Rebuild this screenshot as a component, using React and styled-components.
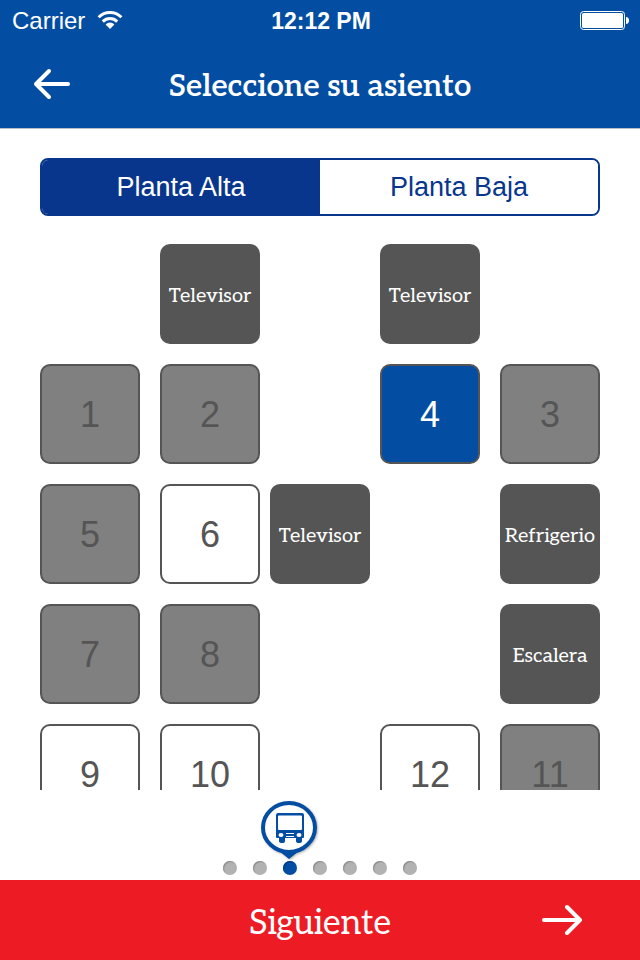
import React, { useState } from 'react'
import styled, { createGlobalStyle, css } from 'styled-components'

const rows = [
  { id: 'a', left: [null, { label: 'Televisor' }], right: [{ label: 'Televisor' }, null] },
  { id: 'b', left: [{ seat: 1, taken: true }, { seat: 2, taken: true }], right: [{ seat: 4 }, { seat: 3, taken: true }] },
  { id: 'c', left: [{ seat: 5, taken: true }, { seat: 6 }], aisle: { label: 'Televisor' }, right: [null, { label: 'Refrigerio' }] },
  { id: 'd', left: [{ seat: 7, taken: true }, { seat: 8, taken: true }], right: [null, { label: 'Escalera' }] },
  { id: 'e', left: [{ seat: 9 }, { seat: 10 }], right: [{ seat: 12 }, { seat: 11, taken: true }] },
]

const floors = ['Planta Alta', 'Planta Baja']
const steps = [0, 1, 2, 3, 4, 5, 6]
const currentStep = 2

const WifiIcon = () => (
  <svg width='26' height='20' viewBox='0 0 26 20' aria-hidden='true'>
    <g fill='none' stroke='#fff' strokeWidth='3'>
      <path d='M1.6 6.2a16.2 16.2 0 0 1 22.8 0' />
      <path d='M5.8 10.6a10.2 10.2 0 0 1 14.4 0' />
    </g>
    <path d='M13 18l-4.4-4.6a6.2 6.2 0 0 1 8.8 0z' fill='#fff' />
  </svg>
)

const BatteryIcon = () => (
  <svg width='50' height='20' viewBox='0 0 50 20' aria-hidden='true'>
    <rect x='0.5' y='0.5' width='44' height='18' rx='3' fill='none' stroke='#fff' />
    <rect x='2' y='2' width='41' height='15' rx='1.5' fill='#fff' />
    <path d='M46 6c2 0 3 1.5 3 3.5s-1 3.5-3 3.5z' fill='#fff' />
  </svg>
)

const ArrowIcon = ({ back }) => (
  <svg width='40' height='32' viewBox='0 0 40 32' aria-hidden='true'>
    <path
      d={back ? 'M36 16H4M17 3L4 16l13 13' : 'M2 16h36M25 3l13 13-13 13'}
      fill='none'
      stroke='#fff'
      strokeWidth='4'
      strokeLinecap='round'
      strokeLinejoin='round'
    />
  </svg>
)

const BusPin = () => (
  <PinSvg width='60' height='62' viewBox='0 0 60 62' aria-hidden='true'>
    <path d='M20 51l10 8 10-8z' fill='#034ea2' />
    <ellipse cx='30' cy='27.5' rx='26' ry='24.5' fill='#fff' stroke='#034ea2' strokeWidth='4' />
    <path
      fillRule='evenodd'
      fill='#034ea2'
      d='M19 13h24q2 0 2 2v22q0 1-1 1h-1v3q0 2-3 2t-3-2v-3H26v3q0 2-3 2t-3-2v-3h-2q-1 0-1-1V15q0-2 2-2zM20 15.500q-1 0-1 1V29q0 1 1 1h22q1 0 1-1V16.500q0-1-1-1z'
    />
    <ellipse cx='22' cy='35' rx='2.5' ry='2' fill='#fff' />
    <ellipse cx='40' cy='35' rx='2.5' ry='2' fill='#fff' />
    <path d='M27 33.500h8M27 36.500h8' stroke='#fff' strokeWidth='1' />
  </PinSvg>
)

const Place = ({ item, selected, onSelect }) => {
  if (!item) return <Empty />
  if (item.label) return <Fixture>{item.label}</Fixture>
  return (
    <Seat
      type='button'
      disabled={item.taken}
      $selected={selected === item.seat}
      aria-pressed={selected === item.seat}
      onClick={() => onSelect(item.seat)}
    >
      {item.seat}
    </Seat>
  )
}

const App = () => {
  const [floor, setFloor] = useState(floors[0])
  const [selected, setSelected] = useState(4)

  const renderPlace = (item, index) => (
    <Place key={index} item={item} selected={selected} onSelect={setSelected} />
  )

  return (
    <Screen>
      <GlobalStyle />
      <Header>
        <StatusBar>
          <Carrier>
            Carrier
            <WifiIcon />
          </Carrier>
          <Clock>12:12 PM</Clock>
          <Battery>
            <BatteryIcon />
          </Battery>
        </StatusBar>
        <TitleBar>
          <IconButton type='button' aria-label='Volver'>
            <ArrowIcon back />
          </IconButton>
          <Title>Seleccione su asiento</Title>
        </TitleBar>
      </Header>

      <Segmented>
        {floors.map((name) => (
          <Segment
            key={name}
            type='button'
            $active={floor === name}
            aria-pressed={floor === name}
            onClick={() => setFloor(name)}
          >
            {name}
          </Segment>
        ))}
      </Segmented>

      <SeatMap>
        {rows.map(({ id, left, aisle, right }) => (
          <SeatRow key={id}>
            <Pair>{left.map(renderPlace)}</Pair>
            <Aisle>{aisle && <Place item={aisle} />}</Aisle>
            <Pair>{right.map(renderPlace)}</Pair>
          </SeatRow>
        ))}
      </SeatMap>

      <Steps>
        {steps.map((step) => (
          <Step key={step} $active={step === currentStep}>
            {step === currentStep && <BusPin />}
          </Step>
        ))}
      </Steps>

      <NextButton type='button'>
        <NextLabel>Siguiente</NextLabel>
        <ArrowIcon />
      </NextButton>
    </Screen>
  )
}

const sans = '"Helvetica Neue", "Liberation Sans", Arial, sans-serif'
const slab = 'Aleo, "DejaVu Serif", serif'

const GlobalStyle = createGlobalStyle`
  * {
    box-sizing: border-box;
  }
  body {
    margin: 0;
    background: #fff;
    font-family: ${sans};
  }
  button {
    margin: 0;
    padding: 0;
    border: 0;
    font: inherit;
    cursor: pointer;
  }
  svg {
    display: block;
  }
`

const Screen = styled.div`
  display: flex;
  flex-direction: column;
  height: 100vh;
`

const Header = styled.header`
  flex: none;
  color: #fff;
  background: #034ea2;
  border-bottom: 1px solid #b5bfcc;
`

const StatusBar = styled.div`
  display: grid;
  grid-template-columns: 1fr auto 1fr;
  align-items: center;
  height: 40px;
  padding: 2px 10px 0 12px;
  font-size: 24px;
`

const Carrier = styled.div`
  display: flex;
  align-items: center;
  gap: 12px;
`

const Clock = styled.time`
  font-size: 23px;
  font-weight: 700;
`

const Battery = styled.div`
  justify-self: end;
`

const TitleBar = styled.div`
  display: grid;
  grid-template-columns: 40px 1fr 40px;
  align-items: center;
  height: 88px;
  padding: 0 32px;
`

const IconButton = styled.button`
  background: transparent;
`

const Title = styled.h1`
  margin: 0;
  padding-top: 4px;
  font-family: ${slab};
  font-size: 31px;
  font-weight: 600;
  text-align: center;
  white-space: nowrap;
`

const Segmented = styled.div`
  display: flex;
  flex: none;
  height: 58px;
  margin: 29px 40px 0;
  border: 2px solid #08368d;
  border-radius: 8px;
  overflow: hidden;
`

const Segment = styled.button`
  flex: 1;
  font-size: 27px;
  color: ${({ $active }) => ($active ? '#fff' : '#08368d')};
  background: ${({ $active }) => ($active ? '#08368d' : '#fff')};
`

const SeatMap = styled.main`
  display: flex;
  flex: 1;
  flex-direction: column;
  gap: 20px;
  min-height: 0;
  padding: 28px 40px 0;
  overflow-y: auto;
  scrollbar-width: none;
`

const SeatRow = styled.div`
  display: flex;
  flex: none;
  gap: 10px;
`

const Pair = styled.div`
  display: flex;
  gap: 20px;
`

const Aisle = styled.div`
  display: flex;
  flex: 1;
  justify-content: center;
`

const tile = css`
  flex: none;
  width: 100px;
  height: 100px;
  border-radius: 10px;
`

const Empty = styled.div`
  ${tile}
`

const Fixture = styled.div`
  ${tile}
  display: flex;
  align-items: center;
  justify-content: center;
  padding-top: 4px;
  font-family: ${slab};
  font-size: 20px;
  color: #fff;
  background: #555;
`

const Seat = styled.button`
  ${tile}
  padding-top: 2px;
  border: 2px solid #555;
  font-size: 36px;
  color: ${({ $selected }) => ($selected ? '#fff' : '#555')};
  background: ${({ $selected }) => ($selected ? '#034ea2' : '#fff')};

  &:disabled {
    color: #555;
    background: #808080;
    cursor: default;
  }
`

const Steps = styled.div`
  display: flex;
  flex: none;
  align-items: flex-end;
  justify-content: center;
  gap: 16px;
  height: 90px;
  padding-bottom: 5px;
`

const Step = styled.span`
  position: relative;
  width: 14px;
  height: 14px;
  border-radius: 50%;
  background: ${({ $active }) => ($active ? '#034ea2' : '#b2b2b2')};
  box-shadow: inset 1px 1px 1px ${({ $active }) => ($active ? '#023c80' : '#8c8c8c')};
`

const PinSvg = styled.svg`
  position: absolute;
  bottom: 13px;
  left: -24px;
  filter: drop-shadow(1px 1px 1px rgba(0, 0, 0, 0.3));
`

const NextButton = styled.button`
  display: grid;
  flex: none;
  grid-template-columns: 40px 1fr 40px;
  align-items: center;
  height: 80px;
  color: #fff;
  background: #ed1c24;

  && {
    padding: 0 58px;
  }
`

const NextLabel = styled.span`
  grid-column: 2;
  padding-top: 6px;
  font-family: ${slab};
  font-size: 34px;
`

export default App
